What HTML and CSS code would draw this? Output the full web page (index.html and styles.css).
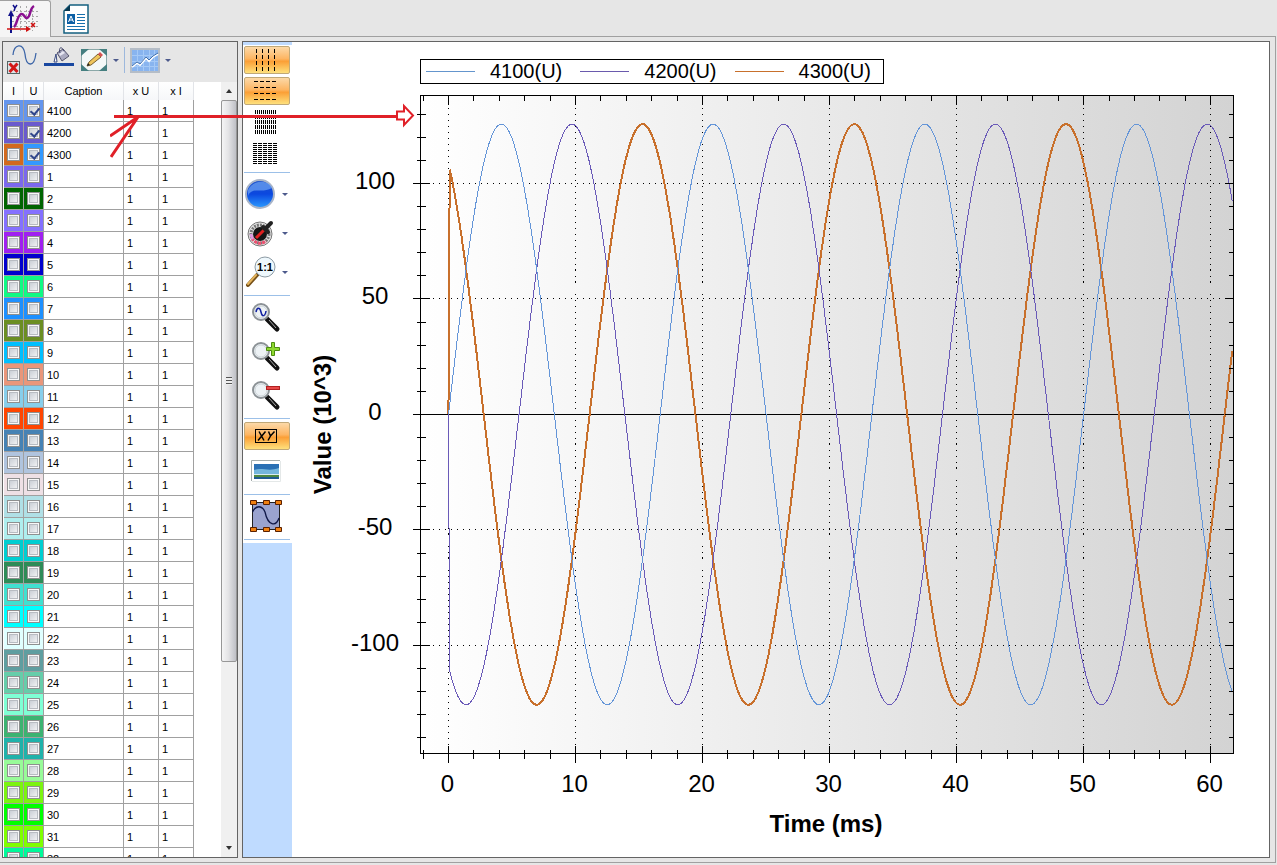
FILE: index.html
```html
<!DOCTYPE html>
<html lang="en">
<head>
    <meta charset="UTF-8">
    <meta name="viewport" content="width=device-width, initial-scale=1.0">
    <title>Waveform Viewer</title>
    <link rel="stylesheet" href="styles.css">
</head>
<body>
    <nav class="tabs">
        <button class="tab active" aria-label="Chart">
            <svg width="34" height="30" viewBox="0 0 34 30">
                <path d="M6 7.500H33M6 12.500H33M6 17.500H33M6 22.500H33M14.500 2V27M20.500 2V27M26.500 2V27" stroke="#a8a8a8" stroke-dasharray="2 2" fill="none"/>
                <path d="M5 29V9" stroke="#10108a" stroke-width="2"/>
                <path d="M5 6L2 12H8Z" fill="#10108a"/>
                <path d="M1 25H23" stroke="#d01010" stroke-width="1.500"/>
                <path d="M20 22L25 25L20 28Z" fill="#d01010"/>
                <path d="M7 1L9 4L11 1M9 4L8 7" stroke="#10108a" stroke-width="1.500" fill="none"/>
                <path d="M25 19L29 23M29 19L25 23" stroke="#d01010" stroke-width="1.500"/>
                <path d="M8 23C11 21 11 12 15 10C18 9 18 14 21 14C25 13 23 5 28 2" stroke="#8a1090" stroke-width="2.500" fill="none"/>
            </svg>
        </button>
        <button class="tab" aria-label="Report">
            <svg width="26" height="30" viewBox="0 0 26 30">
                <path d="M1 7L7 1H25V29H1Z" fill="#fff" stroke="#146080" stroke-width="1.500"/>
                <path d="M1 7H7V1Z" fill="#083850"/>
                <rect x="4" y="10" width="8" height="10" fill="#0b5fa5"/>
                <path d="M5.500 18L8 12L10.500 18M6 16H10" stroke="#fff" fill="none"/>
                <path d="M14 10.500H22M14 13.500H22M14 16.500H22M14 19.500H22M4 22.500H22M4 25.500H22" stroke="#1670ae"/>
            </svg>
        </button>
    </nav>

    <main class="workspace">
        <section class="signals">
            <div class="toolbar">
                <button aria-label="Remove curve">
                    <svg width="32" height="32" viewBox="0 0 32 32">
                        <path d="M7 11C8 0 17 -2 19 10C20 22 28 25 30 9" stroke="#3d66a8" stroke-width="1.300" fill="none"/>
                        <rect x="1.500" y="17.500" width="12" height="12" fill="#dce4e8" stroke="#566"/>
                        <path d="M3.500 19.500L11.500 28M11.500 19.500L3.500 28" stroke="#d31818" stroke-width="3"/>
                    </svg>
                </button>
                <button aria-label="Line colour">
                    <svg width="32" height="32" viewBox="0 0 32 32">
                        <rect x="1" y="19" width="30" height="3" fill="#1947a0"/>
                        <path d="M14 9L20 5L26 12L19 17Z" fill="#aaaac0" stroke="#55556e"/>
                        <path d="M16 10L20 7L22 9L17 12Z" fill="#e6e6f2"/>
                        <path d="M17 9C15 3 19 2 21 7" fill="none" stroke="#44486e"/>
                        <path d="M13 10L11 18H14Z" fill="#fff" stroke="#3a4a80"/>
                    </svg>
                </button>
                <button aria-label="Edit">
                    <svg width="28" height="24" viewBox="0 0 28 24">
                        <rect x="1.500" y="1.500" width="25" height="21" fill="#f4f8f7" stroke="#8ba8a8"/>
                        <path d="M1 1H9L1 8ZM27 1H19L27 8ZM1 23V16L9 23ZM27 23V16L19 23Z" fill="#457f80"/>
                        <path d="M7 18L9 14L18 6L21 9L11 17Z" fill="#f0c65c" stroke="#7a6230"/>
                        <path d="M18 6L20 4L23 7L21 9Z" fill="#d65454"/>
                        <path d="M7 18L8 15L10 17Z" fill="#222"/>
                    </svg>
                </button>
                <i class="caret"></i>
                <i class="divider"></i>
                <button aria-label="Chart style">
                    <svg width="30" height="25" viewBox="0 0 30 25">
                        <rect x="1" y="1" width="28" height="23" fill="#88b4ef" stroke="#b5bdc7" stroke-width="2"/>
                        <path d="M2 7.500H28M2 13.500H28M2 18.500H28M7.500 2V23M13.500 2V23M19.500 2V23M24.500 2V23" stroke="#a5c9f6"/>
                        <path d="M2 19L7 15L10 17L16 10L19 13L23 9L28 6" stroke="#fff" stroke-width="2" fill="none"/>
                        <path d="M2 18L7 14L10 16L16 9L19 12L23 8L28 5" stroke="#3e6fae" fill="none"/>
                    </svg>
                </button>
                <i class="caret"></i>
            </div>
            <div class="list">
                <div class="table-wrap">
                    <table>
                        <thead>
                            <tr><th class="col-check">I</th><th class="col-check">U</th><th class="col-caption">Caption</th><th class="col-scale">x U</th><th class="col-scale">x I</th></tr>
                        </thead>
                        <tbody id="rows"></tbody>
                    </table>
                </div>
                <div class="scrollbar">
                    <button class="arrow-up" aria-label="Scroll up"></button>
                    <div class="track"><div class="thumb"><i class="grip"></i></div></div>
                    <button class="arrow-down" aria-label="Scroll down"></button>
                </div>
            </div>
        </section>

        <section class="view">
            <aside class="side">
                <div class="tools">
                    <button class="tool on" aria-label="Major vertical grid">
                        <svg width="22" height="24" viewBox="0 0 22 24"><path d="M1.500 1V24M7.500 1V24M13.500 1V24M19.500 1V24" stroke="#000" stroke-dasharray="4 2"/></svg>
                    </button>
                    <button class="tool on" aria-label="Major horizontal grid">
                        <svg width="24" height="22" viewBox="0 0 24 22"><path d="M0 1.500H23M0 7.500H23M0 13.500H23M0 19.500H23" stroke="#000" stroke-dasharray="4 2"/></svg>
                    </button>
                    <button class="tool" aria-label="Minor vertical grid">
                        <svg width="24" height="26" viewBox="0 0 24 26"><path d="M1.500 1V25M3.500 1V25M5.500 1V25M7.500 1V25M9.500 1V25M11.500 1V25M13.500 1V25M15.500 1V25M17.500 1V25M19.500 1V25M21.500 1V25" stroke="#000" stroke-dasharray="4 1"/></svg>
                    </button>
                    <button class="tool" aria-label="Minor horizontal grid">
                        <svg width="26" height="24" viewBox="0 0 26 24"><path d="M0 2.500H24M0 4.500H24M0 6.500H24M0 8.500H24M0 10.500H24M0 12.500H24M0 14.500H24M0 16.500H24M0 18.500H24M0 20.500H24M0 22.500H24" stroke="#000" stroke-dasharray="4 1"/></svg>
                    </button>
                    <hr>
                    <button class="tool tall drop" aria-label="Background">
                        <svg width="32" height="32" viewBox="0 0 32 32">
                            <defs><linearGradient id="ball" x1="0" y1="0" x2="0" y2="1"><stop offset="0" stop-color="#1c50c8"/><stop offset=".5" stop-color="#0b48e0"/><stop offset="1" stop-color="#2c9cff"/></linearGradient></defs>
                            <circle cx="16" cy="16" r="14" fill="url(#ball)" stroke="#a8b4c8" stroke-width="2"/>
                            <path d="M4 18C8 8 18 16 28 10C25 2 9 1 4 12Z" fill="#6ea4f4" opacity=".7"/>
                        </svg>
                        <i class="caret"></i>
                    </button>
                    <button class="tool tall drop" aria-label="Pick colour">
                        <svg width="32" height="32" viewBox="0 0 32 32">
                            <circle cx="16" cy="17" r="12" fill="#e6e6e6" stroke="#777"/>
                            <circle cx="16" cy="17" r="9" fill="none" stroke="#777" stroke-width="3" stroke-dasharray="2 1"/>
                            <path d="M8 21A9 9 0 0 0 22 24" fill="none" stroke="#f05070" stroke-width="3" stroke-dasharray="3 1"/>
                            <path d="M7 17A9 9 0 0 0 9 22" fill="none" stroke="#e09ae0" stroke-width="3"/>
                            <circle cx="16" cy="17" r="7" fill="#151515"/>
                            <path d="M12 21L21 12" stroke="#e02020" stroke-width="3"/>
                            <path d="M19 10L24 15M21 12L27 6" stroke="#222" stroke-width="4" stroke-linecap="round"/>
                        </svg>
                        <i class="caret"></i>
                    </button>
                    <button class="tool tall drop" aria-label="Actual size">
                        <svg width="32" height="34" viewBox="0 0 32 34">
                            <path d="M13 20L4 30" stroke="#765018" stroke-width="4" stroke-linecap="round"/>
                            <path d="M12 20L4 29" stroke="#e4b45c" stroke-width="2" stroke-linecap="round"/>
                            <circle cx="21" cy="12" r="10" fill="#eef8fd" stroke="#8d9ba4"/>
                            <text x="21" y="16" text-anchor="middle" class="ratio">1:1</text>
                        </svg>
                        <i class="caret"></i>
                    </button>
                    <hr>
                    <button class="tool tall" aria-label="Zoom to wave">
                        <svg width="30" height="32" viewBox="0 0 30 32">
                            <use href="#lens"/>
                            <path d="M5 11C6 6 9 6 10 11S14 16 15 10" stroke="#1020a0" stroke-width="1.500" fill="none"/>
                        </svg>
                    </button>
                    <button class="tool tall" aria-label="Zoom in">
                        <svg width="30" height="32" viewBox="0 0 30 32">
                            <use href="#lens"/>
                            <path d="M20.500 2.500H23.500V7.500H28.500V10.500H23.500V15.500H20.500V10.500H15.500V7.500H20.500Z" fill="#8ed830" stroke="#4c8c10"/>
                        </svg>
                    </button>
                    <button class="tool tall" aria-label="Zoom out">
                        <svg width="30" height="32" viewBox="0 0 30 32">
                            <use href="#lens"/>
                            <rect x="15.500" y="7.500" width="13" height="3" fill="#e84848" stroke="#b02020"/>
                        </svg>
                    </button>
                    <hr>
                    <button class="tool on" aria-label="XY mode">
                        <svg width="24" height="16" viewBox="0 0 24 16">
                            <rect x="1.500" y="1.500" width="21" height="13" fill="none" stroke="#000"/>
                            <path d="M5 3.500L10 12.500M11.500 3.500L4 12.500M14.500 3.500L16.500 8L20.500 3.500M16.500 8L14 12.500" fill="none" stroke="#000" stroke-width="1.500"/>
                        </svg>
                    </button>
                    <button class="tool tall" aria-label="Save picture">
                        <svg width="32" height="24" viewBox="0 0 32 24">
                            <path d="M1.500 22V1.500H30" fill="none" stroke="#a4acac"/>
                            <path d="M2 22.500H30.500V2" fill="none" stroke="#e4e8e8"/>
                            <rect x="4" y="5" width="25" height="15" fill="#2a70b4"/>
                            <path d="M4 11C12 8 18 13 29 9V15H4Z" fill="#74b6dc"/>
                            <rect x="4" y="15" width="25" height="1" fill="#d8ecf0"/>
                            <rect x="4" y="16" width="25" height="2" fill="#4e8840"/>
                            <rect x="4" y="18" width="25" height="2" fill="#205c90"/>
                        </svg>
                    </button>
                    <hr>
                    <button class="tool tall" aria-label="Select curve">
                        <svg width="34" height="34" viewBox="0 0 34 34">
                            <rect x="3.500" y="3.500" width="27" height="27" fill="#9aa3cf" stroke="#222"/>
                            <path d="M3.500 13C7 6 13 6 16 13C19 27 27 28 30 19" fill="none" stroke="#101848" stroke-width="1.300"/>
                            <path d="M1.500 1.500h6v4h-6zM14.500 1.500h6v4h-6zM26.500 1.500h6v4h-6zM1.500 28.500h6v4h-6zM14.500 28.500h6v4h-6zM26.500 28.500h6v4h-6z" fill="#f08010" stroke="#5a2000"/>
                        </svg>
                    </button>
                    <hr>
                </div>
            </aside>
            <div class="chart">
                <div class="legend">
                    <span class="key blue">4100(U)</span>
                    <span class="key purple">4200(U)</span>
                    <span class="key orange">4300(U)</span>
                </div>
                <svg id="plot"></svg>
            </div>
        </section>
    </main>

    <!-- arrow from the table rows to the graph -->
    <svg class="pointer" width="310" height="62" viewBox="0 0 310 62">
        <path d="M4 17.500H287M0 37L28 18M1 58L28 18" stroke="#e02028" stroke-width="3" fill="none"/>
        <path d="M287 12.500H294V7L303 16.500L294 26V20.500H287Z" fill="#fff" stroke="#e02028" stroke-width="2"/>
    </svg>

    <svg width="0" height="0" class="defs">
        <defs>
            <g id="lens">
                <path d="M16 18L26 28" stroke="#111" stroke-width="5" stroke-linecap="round"/>
                <path d="M18 19L25 27" stroke="#aaa" stroke-width="1"/>
                <circle cx="10" cy="11" r="8" fill="#edf2f5" stroke="#8c9296" stroke-width="2"/>
                <circle cx="10" cy="11" r="6" fill="none" stroke="#cdd4d8"/>
            </g>
        </defs>
    </svg>
    <script src="script.js"></script>
</body>
</html>
```

FILE: styles.css
```css
* { margin: 0; padding: 0; box-sizing: border-box; }
body { display: flex; flex-direction: column; height: 100vh; padding: 0 1px 2px 0; background: #e6e6e6; color: #000; font-family: "Liberation Sans", Arial, sans-serif; font-size: 11px; overflow: hidden; }
button { border: none; background: none; font: inherit; }
svg { display: block; flex: none; }
.defs { position: absolute; }

.tabs { display: flex; height: 37px; flex: none; border-bottom: 1px solid #a0a0a0; }
.tab { display: flex; align-items: center; justify-content: center; width: 50px; height: 37px; }
.tab.active { width: 51px; background: #f5f5f5; border: 1px solid #a0a0a0; border-width: 1px 1px 0 0; border-radius: 0 3px 0 0; padding-right: 4px; }

.workspace { display: flex; flex: 1; min-height: 0; gap: 4px; padding: 4px 5px 4px 2px; border: 1px solid #a0a0a0; border-width: 0 1px 1px 0; }
.signals, .view { display: flex; border: 1px solid #646464; background: #fff; min-height: 0; }
.signals { flex-direction: column; width: 236px; flex: none; }
.view { flex: 1; min-width: 0; }

.toolbar { display: flex; align-items: center; height: 40px; flex: none; padding: 0 2px 4px 3px; gap: 5px; background: #e6e6e6; }
.caret { width: 0; height: 0; border: 3px solid transparent; border-top-color: #4d5a8c; border-bottom: 0; }
.divider { width: 1px; height: 26px; background: #9db8dc; }

.list { display: flex; flex: 1; min-height: 0; }
.table-wrap { flex: 1; overflow: hidden; padding-left: 1px; }
table { border-collapse: separate; border-spacing: 0; table-layout: fixed; width: 190px; }
th { height: 18px; font-weight: normal; border-right: 1px solid #e2e4e8; background: linear-gradient(#fff, #f6f7f9); }
.col-check { width: 20px; }
.col-caption { width: 80px; }
.col-scale { width: 35px; }
td { height: 22px; padding-left: 3px; border: 1px solid #a0a0a0; border-width: 0 1px 1px 0; }
td.check { padding-left: 0; }
td.check input { display: block; margin: 0 auto; }
input { appearance: none; position: relative; width: 13px; height: 13px; border: 1px solid #8e8f8f; background: linear-gradient(135deg, #c0c6ce, #fafafa); box-shadow: inset 0 0 0 1px #f8f8f8, inset 0 0 0 2px #b8bcc2; }
input:checked::after { content: ""; position: absolute; left: 4px; top: 1px; width: 4px; height: 7px; border: solid #31478c; border-width: 0 2px 2px 0; transform: rotate(40deg); }

.scrollbar { display: flex; flex-direction: column; width: 16px; background: #f0f0f0; }
.scrollbar button { height: 18px; display: flex; align-items: center; justify-content: center; }
.arrow-up::before, .arrow-down::before { content: ""; border: 3px solid transparent; border-bottom: 4px solid #333; border-top: 0; }
.arrow-down::before { border-top: 4px solid #333; border-bottom: 0; }
.track { flex: 1; }
.thumb { display: flex; align-items: center; justify-content: center; height: 76%; border: 1px solid #979797; border-radius: 2px; background: linear-gradient(90deg, #f5f5f5, #e4e4e6 45%, #bfc0c6); }
.grip { width: 6px; height: 8px; background: repeating-linear-gradient(#555 0 1px, #eee 1px 3px); }

.side { width: 49px; flex: none; padding-top: 3px; background: #bfdbff; }
.tools { display: flex; flex-direction: column; gap: 3px; padding: 1px 2px 3px 1px; background: #fff; }
.tool { display: flex; align-items: center; justify-content: center; height: 28px; flex: none; border-radius: 2px; padding-right: 2px; }
.tool.on { border: 1px solid #c0a878; background: linear-gradient(#fcd9a8, #fdb562 45%, #fb9f36 55%, #fee07c); }
.tool.tall { height: 36px; }
.tool.drop { justify-content: flex-start; gap: 6px; }
.tools hr { height: 1px; margin-top: 2px; flex: none; border: 0; background: #9cc0e8; }
.ratio { font: bold 11px "Liberation Sans", Arial, sans-serif; }

.chart { display: flex; flex-direction: column; flex: 1; min-width: 0; padding-top: 17px; }
.legend { display: flex; align-self: flex-start; gap: 18px; height: 25px; margin-left: 128px; padding: 0 12px 0 5px; border: 1px solid #000; font-size: 20px; line-height: 22px; }
.key { display: flex; gap: 15px; }
.key::before { content: ""; width: 49px; height: 1px; margin-top: 11px; }
.blue::before { background: #6495cd; }
.purple::before { background: #6a5aad; }
.orange::before { background: #c8702c; }
#plot { width: 100%; flex: 1; min-height: 0; }
#plot text { font-size: 24px; text-anchor: middle; }
#plot .title { font-weight: bold; }
.crisp { shape-rendering: crispEdges; fill: none; stroke: #000; }
.dots { stroke-dasharray: 1 5; }
.curve { shape-rendering: crispEdges; fill: none; }

.pointer { position: absolute; left: 110px; top: 99px; pointer-events: none; }
```

FILE: script.js
```javascript
const colors = ['#6495ed', '#6a5acd', '#d2691e', '#7b68ee', '#006400', '#8470ff', '#a020f0', '#0000cd', '#10fa84', '#1e90ff',
    '#6b8e23', '#00bfff', '#e9967a', '#87ceeb', '#ff4500', '#4682b4', '#b0c4de', '#eee0e5', '#b0e0e6', '#afeeee', '#00ced1',
    '#2e8b57', '#40e0d0', '#00ffff', '#e0ffff', '#5f9ea0', '#66cdaa', '#7fffd4', '#3cb371', '#20b2aa', '#98fb98', '#7cf410',
    '#00ff00', '#7fff00', '#00fa9a'];
const names = ['4100', '4200', '4300'];
for (let i = 1; i <= 32; i++) names.push(String(i));

document.getElementById('rows').innerHTML = names.map((name, i) => {
    const uColor = name === '4300' ? '#3399ff' : colors[i];
    return `<tr>
        <td class="check" style="background:${colors[i]}"><input type="checkbox" aria-label="${name} I"></td>
        <td class="check" style="background:${uColor}"><input type="checkbox" aria-label="${name} U" ${i < 3 ? 'checked' : ''}></td>
        <td>${name}</td><td>1</td><td>1</td></tr>`;
}).join('');

const plot = document.getElementById('plot');
const xMin = -2.2, xMax = 61.8, yMin = -146.8, yMax = 138.1;

function drawPlot() {
    const left = 128.5, top = 11.5;
    const right = plot.clientWidth - 35.5, bottom = plot.clientHeight - 103.5;
    const px = t => left + (t - xMin) / (xMax - xMin) * (right - left);
    const py = v => top + (yMax - v) / (yMax - yMin) * (bottom - top);
    const snap = n => Math.floor(n) + 0.5;
    let ticks = '', grid = '', labels = '';

    for (let t = -2; t <= 60; t += 2) {
        const x = snap(px(t)), size = t % 10 === 0 ? 8 : 4;
        ticks += `M${x} ${bottom - size}V${bottom + size + 1}M${x} ${top}V${top + size + 1}`;
        if (size === 8) {
            grid += `M${x} ${top}V${bottom}`;
            labels += `<text x="${x - 1}" y="${bottom + 38}">${t}</text>`;
        }
    }
    for (let v = -140; v <= 130; v += 10) {
        const y = snap(py(v)), size = v % 50 === 0 ? 8 : 4;
        ticks += `M${left - size} ${y}H${left + size + 1}M${right} ${y}H${right - size - 1}`;
        if (size === 8) {
            if (v) grid += `M${left} ${y}H${right}`;
            labels += `<text x="83" y="${y + 5}">${v}</text>`;
        }
    }

    // three phases, 60 Hz, switched on at t = 0
    const wave = (shift, start) => {
        let d = `M${px(0)} ${py(0)}L${px(0.1)} ${py(start)}`;
        for (let t = 0.2; t <= xMax; t += 0.1) {
            d += `L${px(t).toFixed(1)} ${py(125.7 * Math.sin(2 * Math.PI * (t / 16.667 - shift / 3))).toFixed(1)}`;
        }
        return d;
    };

    plot.innerHTML = `
        <defs><linearGradient id="fade"><stop offset="0" stop-color="#fff"/><stop offset="1" stop-color="#d3d3d3"/></linearGradient></defs>
        <rect x="${left}" y="${top}" width="${right - left}" height="${bottom - top}" fill="url(#fade)"/>
        <path class="crisp dots" d="${grid}"/>
        <path class="crisp" d="M${left} ${snap(py(0))}H${right}"/>
        <path class="curve" stroke="#c8702c" stroke-width="2" d="${wave(2, 106)}"/>
        <path class="curve" stroke="#6a5ab8" d="${wave(1, -111)}"/>
        <path class="curve" stroke="#6495d8" d="${wave(0, 4)}"/>
        <path class="crisp" d="M${left} ${top}H${right}V${bottom}H${left}Z${ticks}"/>
        ${labels}
        <text class="title" x="${(left + right) / 2 - 1}" y="${bottom + 78}">Time (ms)</text>
        <text class="title" transform="translate(39 ${(top + bottom) / 2}) rotate(-90)">Value (10^3)</text>`;
}

drawPlot();
window.addEventListener('resize', drawPlot);
```
